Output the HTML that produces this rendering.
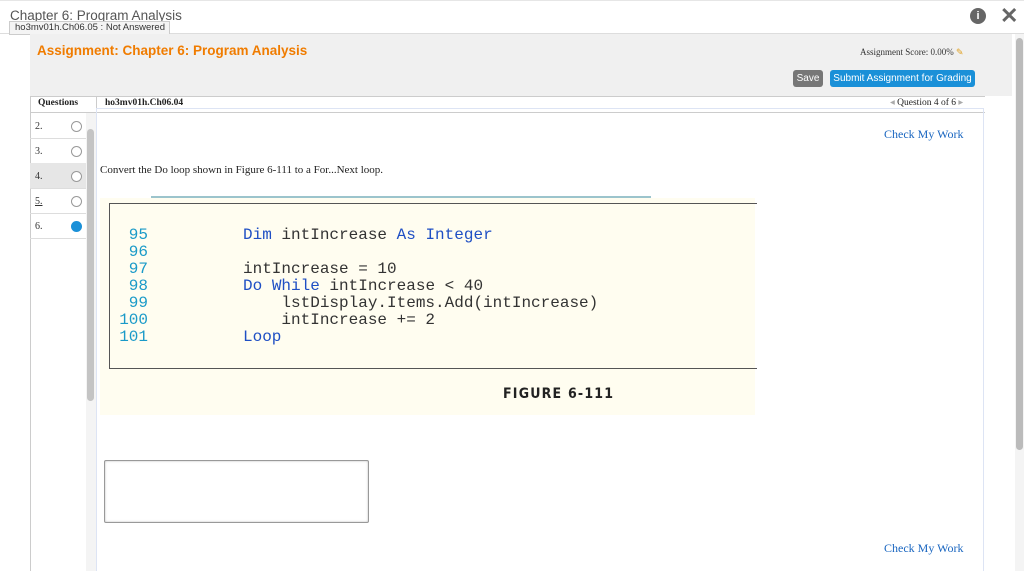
<!DOCTYPE html>
<html><head><style>
*{margin:0;padding:0;box-sizing:border-box}
body{width:1024px;height:571px;position:relative;overflow:hidden;background:#fff;font-family:"Liberation Serif",serif}
.a{position:absolute}
.mono{font-family:"Liberation Mono",monospace;font-size:16px;line-height:17px;white-space:pre}
.k{color:#1f4fc4}
.n{color:#1a9ac8}
.rad{width:11px;height:11px;border-radius:50%;border:1px solid #999;background:#fff}
.row{left:30px;width:56px;height:26px;border-bottom:1px solid #ddd;font-size:10px;color:#333;padding:8px 0 0 5px}
</style></head><body>
<div class="a" style="left:0;top:0;width:1024px;height:34px;background:#fff;border-top:1px solid #e6e6e6;border-bottom:1px solid #ddd"></div>
<div class="a" style="left:10px;top:8px;font-family:'Liberation Sans',sans-serif;font-size:13.5px;color:#555">Chapter 6: Program Analysis</div>
<div class="a" style="left:9px;top:21px;width:161px;height:14px;background:#f4f4f4;border:1px solid #ccc;font-family:'Liberation Sans',sans-serif;font-size:9.5px;color:#333;padding:0 0 0 5px;line-height:12px">ho3mv01h.Ch06.05 : Not Answered</div>
<div class="a" style="left:970px;top:8px;width:16px;height:16px;border-radius:50%;background:#666;color:#fff;font:bold 11px 'Liberation Sans',sans-serif;text-align:center;line-height:16px">i</div>
<div class="a" style="left:1000px;top:3px;font:bold 22px 'Liberation Sans',sans-serif;color:#666">✕</div>
<div class="a" style="left:30px;top:34px;width:982px;height:62px;background:#f0f0f0"></div>
<div class="a" style="left:37px;top:43px;font:bold 13.5px 'Liberation Sans',sans-serif;color:#f07c00">Assignment: Chapter 6: Program Analysis</div>
<div class="a" style="left:860px;top:47px;font-size:9px;color:#333">Assignment Score: 0.00% <span style="color:#e0a020">✎</span></div>
<div class="a" style="left:793px;top:70px;width:30px;height:17px;background:#777;border-radius:3px;color:#fff;font:10px 'Liberation Sans',sans-serif;text-align:center;line-height:17px">Save</div>
<div class="a" style="left:830px;top:70px;width:145px;height:17px;background:#1a90d8;border-radius:3px;color:#fff;font:10px 'Liberation Sans',sans-serif;text-align:center;line-height:17px">Submit Assignment for Grading</div>
<div class="a" style="left:1015px;top:34px;width:9px;height:537px;background:#f4f4f4"></div>
<div class="a" style="left:1016px;top:38px;width:7px;height:412px;background:#bbb;border-radius:4px"></div>
<div class="a" style="left:30px;top:96px;width:955px;height:17px;border-top:1px solid #ccc;border-bottom:1px solid #ccc;background:#fff"></div>
<div class="a" style="left:30px;top:96px;width:1px;height:475px;background:#ccc"></div>
<div class="a" style="left:96px;top:96px;width:1px;height:17px;background:#ccc"></div>
<div class="a" style="left:38px;top:98px;font-size:9.5px;font-weight:bold;color:#222">Questions</div>
<div class="a" style="left:105px;top:98px;font-size:9.5px;font-weight:bold;color:#222">ho3mv01h.Ch06.04</div>
<div class="a" style="left:890px;top:98px;font-size:9.5px;color:#222;line-height:11px"><span style="color:#aaa">◂</span> Question 4 of 6 <span style="color:#aaa">▸</span></div>
<div class="a" style="left:96px;top:108px;width:888px;height:463px;border:1px solid #dde4f4;border-bottom:none"></div>
<div class="a row" style="top:113px">2.<div class="a rad" style="left:41px;top:8px"></div></div>
<div class="a row" style="top:138px">3.<div class="a rad" style="left:41px;top:8px"></div></div>
<div class="a row" style="top:163px;background:#e6e6e6">4.<div class="a rad" style="left:41px;top:8px"></div></div>
<div class="a row" style="top:188px"><u>5.</u><div class="a rad" style="left:41px;top:8px"></div></div>
<div class="a row" style="top:213px">6.<div class="a rad" style="left:41px;top:8px;background:#1a90d8;border-color:#1a90d8"></div></div>
<div class="a" style="left:86px;top:113px;width:10px;height:458px;background:#f4f4f4"></div>
<div class="a" style="left:87px;top:129px;width:7px;height:272px;background:#c4c4c4;border-radius:4px"></div>
<div class="a" style="left:884px;top:127px;font-size:12px;color:#1a66c0">Check My Work</div>
<div class="a" style="left:100px;top:164px;font-size:11px;color:#222">Convert the Do loop shown in Figure 6-111 to a For...Next loop.</div>
<div class="a" style="left:151px;top:196px;width:500px;height:2px;background:#9cc4cc"></div>
<div class="a" style="left:100px;top:198px;width:655px;height:217px;background:#fffdf0"></div>
<div class="a" style="left:109px;top:203px;width:648px;height:166px;border:1.5px solid #555;border-right:none"></div>
<div class="a mono n" style="left:110px;top:227px;text-align:right;width:38px">95
96
97
98
99
100
101</div>
<div class="a mono" style="left:243px;top:227px;color:#333"><span class="k">Dim</span> intIncrease <span class="k">As</span> <span class="k">Integer</span>

intIncrease = 10
<span class="k">Do</span> <span class="k">While</span> intIncrease &lt; 40
    lstDisplay.Items.Add(intIncrease)
    intIncrease += 2
<span class="k">Loop</span></div>
<div class="a" style="left:503px;top:386px;font:bold 14px 'DejaVu Sans Condensed','Liberation Sans',sans-serif;color:#222;letter-spacing:1.2px">FIGURE 6-111</div>
<div class="a" style="left:104px;top:460px;width:265px;height:63px;border:1px solid #999;border-radius:2px;box-shadow:inset 0 0 2px #bbb"></div>
<div class="a" style="left:884px;top:541px;font-size:12px;color:#1a66c0">Check My Work</div>
</body></html>
